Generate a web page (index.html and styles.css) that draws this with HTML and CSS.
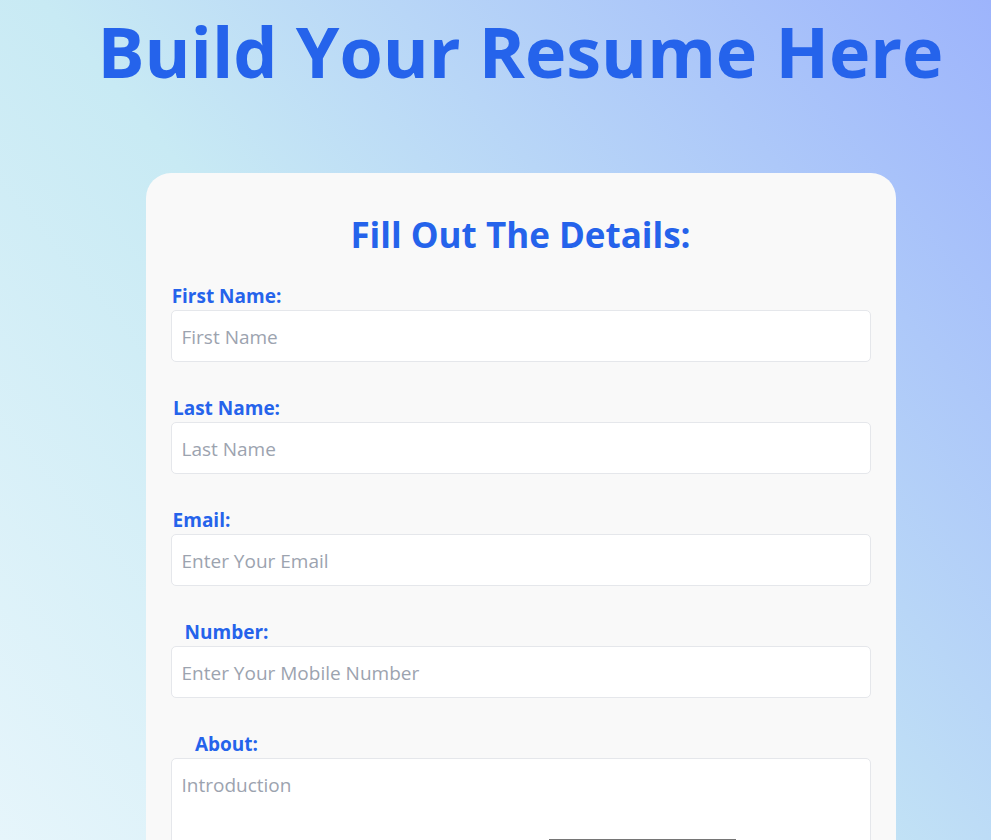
FILE: index.html
```html
<!DOCTYPE html>
<html lang="en">
<head>
<meta charset="utf-8">
<title>Build Your Resume Here</title>
<link rel="stylesheet" href="styles.css">
</head>
<body>
<main class="page">
  <h1 class="page-title">Build Your Resume Here</h1>
  <form class="card">
    <h2 class="card-title">Fill Out The Details:</h2>
    <div class="field">
      <label class="label" for="first">First Name:</label>
      <input class="control" id="first" type="text" placeholder="First Name">
    </div>
    <div class="field">
      <label class="label" for="last">Last Name:</label>
      <input class="control" id="last" type="text" placeholder="Last Name">
    </div>
    <div class="field">
      <label class="label label-short" for="email">Email:</label>
      <input class="control" id="email" type="email" placeholder="Enter Your Email">
    </div>
    <div class="field">
      <label class="label" for="number">Number:</label>
      <input class="control" id="number" type="tel" placeholder="Enter Your Mobile Number">
    </div>
    <div class="field">
      <label class="label" for="about">About:</label>
      <div class="about">
        <textarea class="control area" id="about" placeholder="Introduction"></textarea>
        <div class="hint"></div>
      </div>
    </div>
  </form>
</main>
</body>
</html>
```
FILE: styles.css
```css
* { box-sizing: border-box; }
body {
  margin: 0;
  height: 100vh;
  overflow: hidden;
  font-family: "Segoe UI", "Open Sans", "Noto Sans", sans-serif;
  color: #2563eb;
  background: linear-gradient(50deg, #e6f5fb, #c8eaf4 44%, #9db4fc);
}
.page {
  display: flex;
  flex-direction: column;
  align-items: center;
  padding-left: 50px;
}
.page-title {
  margin: 0 0 71px;
  font-size: 70px;
  line-height: 102px;
  font-weight: 700;
  white-space: nowrap;
}
.card {
  width: 100%;
  max-width: 750px;
  padding: 37px 25px;
  border-radius: 25px;
  background: #f9f9f9;
}
.card-title {
  margin: 0 0 23px;
  font-size: 35px;
  line-height: 50px;
  font-weight: 700;
  text-align: center;
}
.field {
  display: flex;
  flex-direction: column;
  margin-bottom: 33px;
}
.label {
  width: 112px;
  font-size: 19px;
  line-height: 27px;
  font-weight: 700;
  text-align: center;
  white-space: nowrap;
}
.label-short { width: 62px; }
.control {
  display: block;
  width: 100%;
  height: 52px;
  padding: 11px 10px 9px;
  border: 1px solid #e5e7eb;
  border-radius: 5px;
  background: #fff;
  color: #111827;
  font: inherit;
  font-size: 19px;
  line-height: 30px;
}
.control::placeholder { color: #9ca3af; opacity: 1; }
.about { position: relative; }
.area { height: 150px; resize: none; }
.hint {
  position: absolute;
  top: 81px;
  left: 54%;
  width: 187px;
  height: 32px;
  border: 1px solid #767676;
  background: #fff;
}
```
